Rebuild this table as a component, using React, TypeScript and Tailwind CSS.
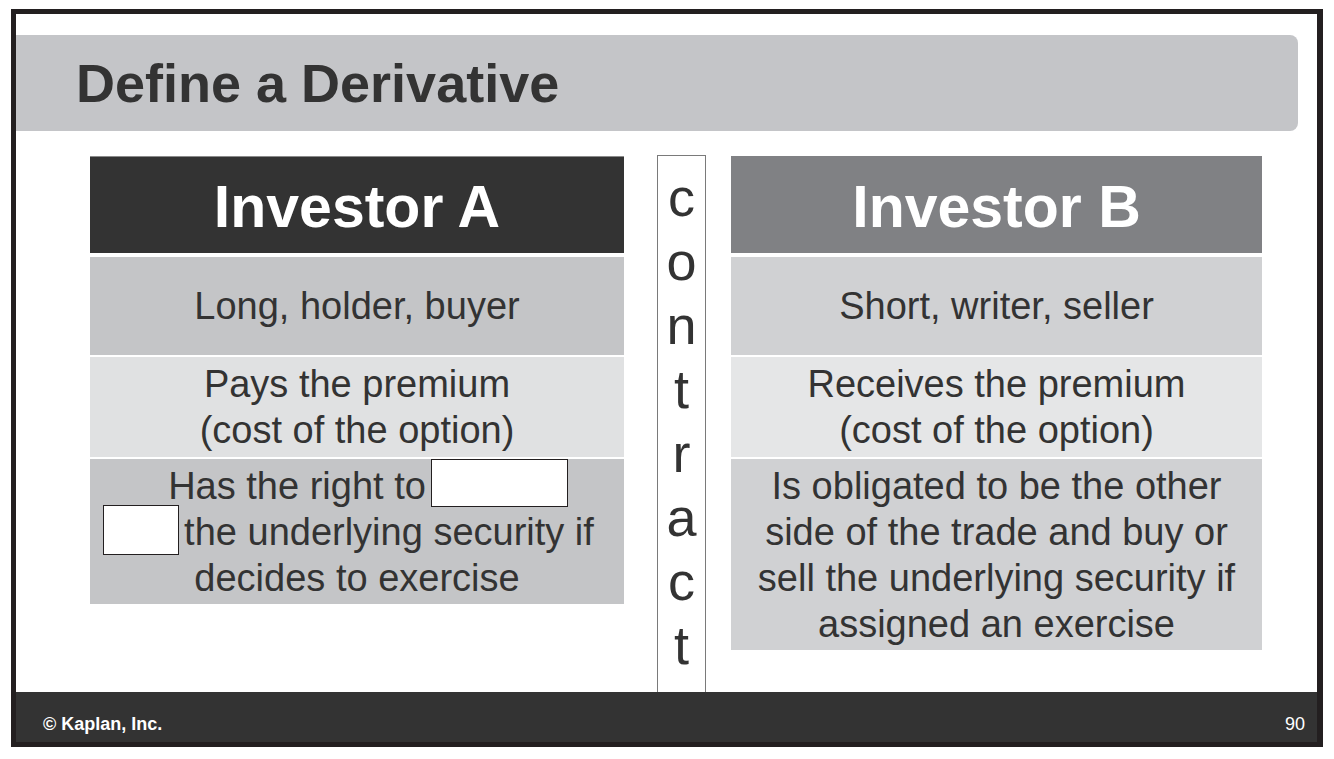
const letters = ['c', 'o', 'n', 't', 'r', 'a', 'c', 't'];

function Cell({ bg, h, children }: { bg: string; h: string; children: React.ReactNode }) {
  return (
    <div className={`${bg} ${h} flex flex-col items-center justify-center text-[38px] leading-[46px] text-[#333333] text-center whitespace-nowrap`}>
      {children}
    </div>
  );
}

export default function App() {
  return (
    <div className="w-[1334px] h-[759px] bg-white pt-[9px] pl-[11px] font-['Liberation_Sans',Arial,sans-serif]">
      <div className="w-[1312px] h-[738px] border-[5px] border-r-[6px] border-[#231f20] flex flex-col">
        {/* title bar */}
        <div className="shrink-0 mt-[21px] mr-[19px] h-[96px] bg-[#c4c5c8] rounded-r-[8px] flex items-center pl-[60px]">
          <h1 className="text-[54px] leading-none font-bold text-[#333333]">Define a Derivative</h1>
        </div>

        {/* body */}
        <div className="flex-1 min-h-0 flex items-start pt-[24px] pl-[74px]">
          {/* Investor A */}
          <div className="w-[534px] mt-px flex flex-col">
            <div className="h-[97px] bg-[#333333] border-t border-[#8a8a8a] flex items-center justify-center pt-[5px] text-white font-bold text-[59px] leading-none">
              Investor A
            </div>
            <div className="mt-[4px]">
              <Cell bg="bg-[#c4c5c7]" h="h-[98px]">Long, holder, buyer</Cell>
            </div>
            <div className="mt-[2px]">
              <Cell bg="bg-[#e0e1e2]" h="h-[100px]">
                <span>Pays the premium</span>
                <span>(cost of the option)</span>
              </Cell>
            </div>
            <div className="mt-[2px] h-[145px] bg-[#c4c5c7] pt-[4px] flex flex-col text-[38px] leading-[46px] text-[#333333] whitespace-nowrap">
              <div className="h-[46px] flex items-center justify-center pl-[22px]">
                <span>Has the right to</span>
                <span className="ml-[5px] mb-[6px] w-[137px] h-[48px] bg-white border-[1.5px] border-[#231f20] shrink-0" />
              </div>
              <div className="h-[46px] flex items-center justify-center pr-[17px]">
                <span className="mr-[5px] mb-[4px] w-[76px] h-[50px] bg-white border-[1.5px] border-[#231f20] shrink-0" />
                <span>the underlying security if</span>
              </div>
              <div className="h-[46px] flex items-center justify-center">
                <span>decides to exercise</span>
              </div>
            </div>
          </div>

          {/* contract strip */}
          <div className="ml-[33px] w-[49px] h-[539px] shrink-0 border border-[#7a7a7a] bg-white flex flex-col items-center pt-[9px] text-[54px] leading-[64px] text-[#333333]">
            {letters.map((l, i) => (
              <span key={i}>{l}</span>
            ))}
          </div>

          {/* Investor B */}
          <div className="ml-[25px] w-[531px] mt-px flex flex-col">
            <div className="h-[97px] bg-[#808184] flex items-center justify-center pt-[5px] text-white font-bold text-[59px] leading-none">
              Investor B
            </div>
            <div className="mt-[4px]">
              <Cell bg="bg-[#d0d1d3]" h="h-[98px]">Short, writer, seller</Cell>
            </div>
            <div className="mt-[2px]">
              <Cell bg="bg-[#e5e6e7]" h="h-[100px]">
                <span>Receives the premium</span>
                <span>(cost of the option)</span>
              </Cell>
            </div>
            <div className="mt-[2px]">
              <Cell bg="bg-[#d0d1d3]" h="h-[191px]">
                <span>Is obligated to be the other</span>
                <span>side of the trade and buy or</span>
                <span>sell the underlying security if</span>
                <span>assigned an exercise</span>
              </Cell>
            </div>
          </div>
        </div>

        {/* footer */}
        <div className="shrink-0 h-[50px] bg-[#333333] flex items-start justify-between pt-[23px] pl-[27px] pr-[12px] text-white text-[18px] leading-none">
          <span className="font-bold">© Kaplan, Inc.</span>
          <span>90</span>
        </div>
      </div>
    </div>
  );
}
